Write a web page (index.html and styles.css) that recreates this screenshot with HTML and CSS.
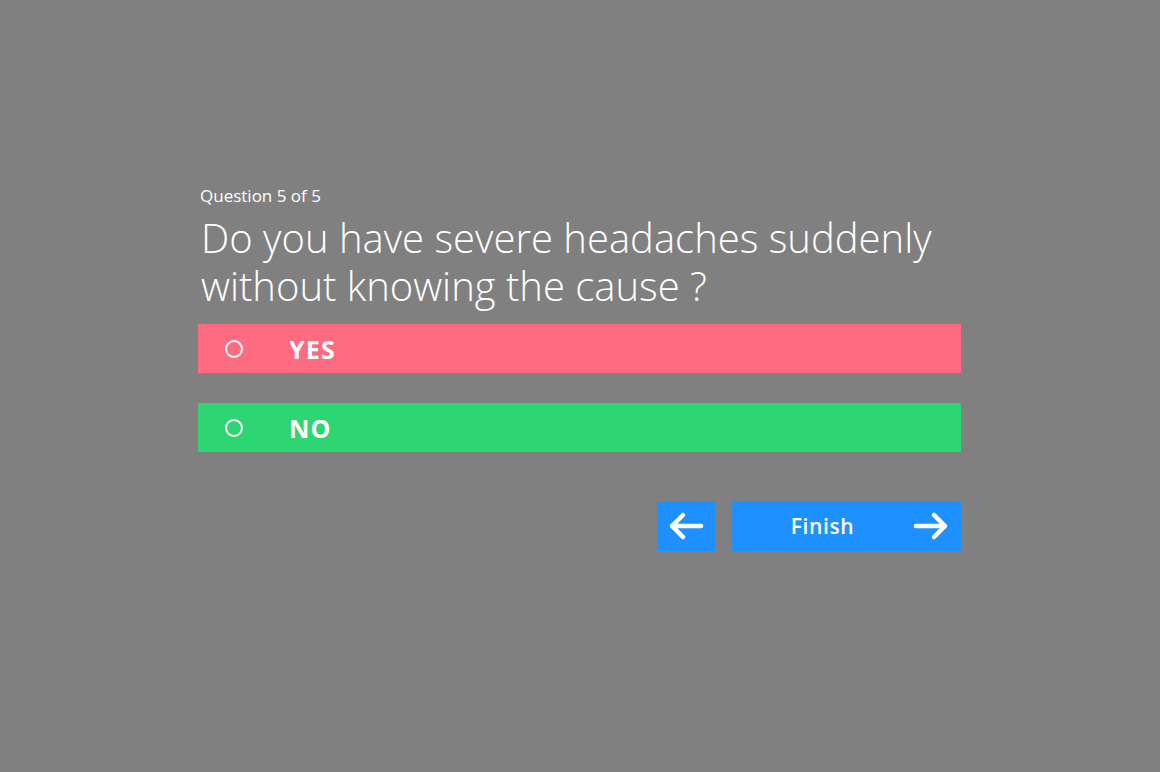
FILE: index.html
```html
<!DOCTYPE html>
<html>
<head>
<meta charset="utf-8">
<link rel="stylesheet" href="styles.css">
</head>
<body>
<div class="quiz">
  <div class="counter">Question 5 of 5</div>
  <h1 class="question">Do you have severe headaches suddenly without knowing the cause ?</h1>
  <div class="options">
    <div class="option option-yes"><span class="radio"></span><span class="label">YES</span></div>
    <div class="option option-no"><span class="radio"></span><span class="label">NO</span></div>
  </div>
  <div class="nav">
    <button class="btn btn-back" aria-label="Back">
      <svg width="36" height="30" viewBox="0 0 36 30"><path d="M33 15H4M15 4L4 15L15 26" fill="none" stroke="#fff" stroke-width="4.5" stroke-linecap="round" stroke-linejoin="round"/></svg>
    </button>
    <button class="btn btn-finish"><span class="finish-text">Finish</span>
      <svg class="arrow-right" width="36" height="30" viewBox="0 0 36 30"><path d="M3 15H32M21 4L32 15L21 26" fill="none" stroke="#fff" stroke-width="4.5" stroke-linecap="round" stroke-linejoin="round"/></svg>
    </button>
  </div>
</div>
</body>
</html>
```
FILE: styles.css
```css
html, body {
  margin: 0;
  padding: 0;
  background: #808080;
  height: 100%;
}
body {
  font-family: "Open Sans", "Noto Sans", sans-serif;
  color: #fff;
}
.quiz {
  width: 763px;
  margin: 0 0 0 198px;
  padding-top: 185px;
}
.counter {
  font-size: 17px;
  line-height: 22px;
  padding-left: 2px;
}
.question {
  margin: 7px 0 0 0;
  padding-left: 3px;
  font-weight: 300;
  font-size: 40px;
  line-height: 48px;
  letter-spacing: 0;
}
.options {
  margin-top: 14px;
  display: flex;
  flex-direction: column;
  gap: 30px;
}
.option {
  height: 49px;
  display: flex;
  align-items: center;
}
.option-yes { background: #ff6b81; }
.option-no { background: #2ed573; }
.radio {
  width: 14px;
  height: 14px;
  border: 2px solid #fff;
  border-radius: 50%;
  margin-left: 27px;
  box-sizing: content-box;
}
.label {
  margin-left: 46px;
  font-weight: 700;
  font-size: 25px;
  letter-spacing: 1.2px;
}
.nav {
  margin-top: 49px;
  display: flex;
  justify-content: flex-end;
  gap: 17px;
}
.btn {
  border: none;
  background: #1e90ff;
  color: #fff;
  height: 50px;
  padding: 0;
  display: flex;
  align-items: center;
  cursor: pointer;
  font-family: inherit;
}
.btn-back {
  width: 58px;
  justify-content: center;
}
.btn-finish {
  width: 229px;
  position: relative;
}
.finish-text {
  flex: 1;
  text-align: center;
  font-size: 21px;
  font-weight: 600;
  letter-spacing: 0.6px;
  padding-right: 48px;
}
.arrow-right {
  position: absolute;
  right: 12px;
  top: 10px;
}
```
